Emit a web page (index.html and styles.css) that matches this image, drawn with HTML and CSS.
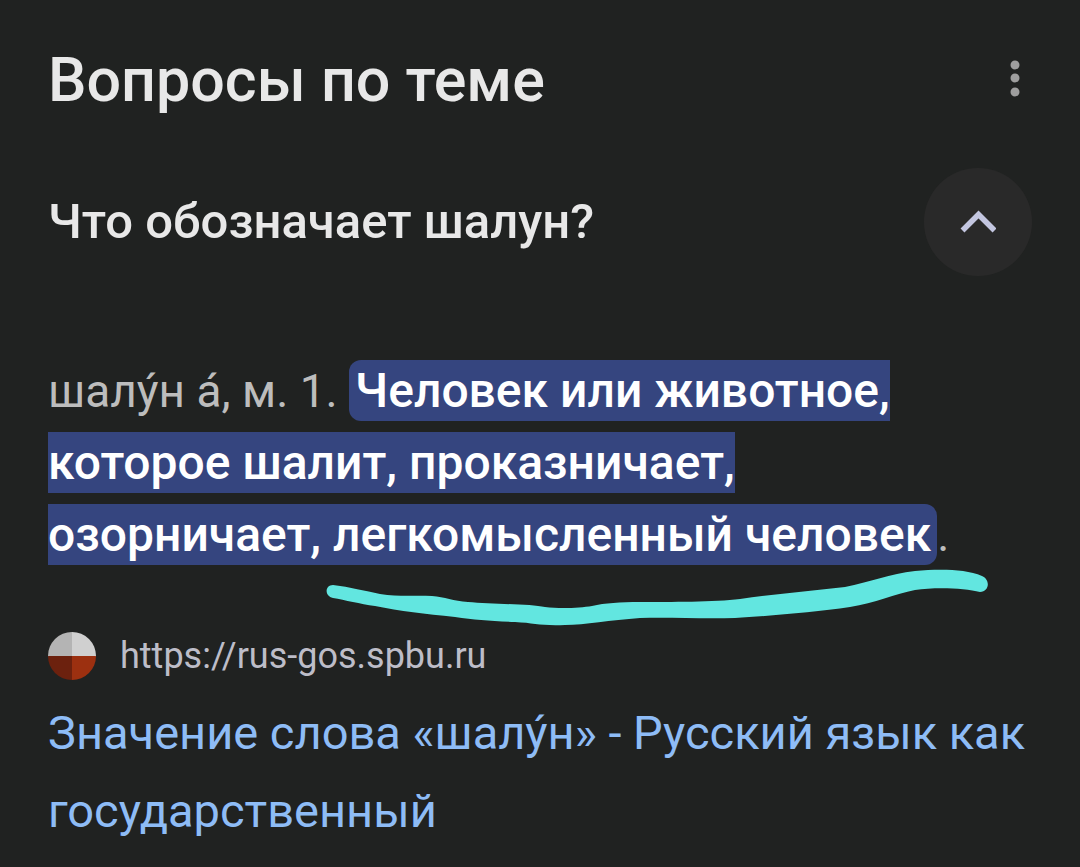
FILE: index.html
```html
<!DOCTYPE html>
<html lang="ru">
  <head>
    <meta charset="UTF-8" />
    <meta name="viewport" content="width=device-width, initial-scale=1.0" />
    <title>Вопросы по теме</title>
    <link rel="stylesheet" href="styles.css">
  </head>
  <body>
    <main>
      <header class="top">
        <h1>Вопросы по теме</h1>
        <button class="menu" type="button" aria-label="Ещё">
          <svg width="12" height="40" viewBox="0 0 12 40" fill="currentColor">
            <circle cx="6" cy="5" r="4.5" />
            <circle cx="6" cy="18" r="4.5" />
            <circle cx="6" cy="32" r="4.5" />
          </svg>
        </button>
      </header>

      <section>
        <div class="question">
          <h2>Что обозначает шалун?</h2>
          <button class="toggle" type="button" aria-label="Свернуть" aria-expanded="true">
            <svg width="36" height="24" viewBox="0 0 36 24" fill="none" stroke="currentColor" stroke-width="5.5">
              <path d="M2.500 20.500 L18.500 4.500 L34.500 20.500" />
            </svg>
          </button>
        </div>

        <div class="answer">
          <p>шалу&#x301;н а&#x301;, м. 1. <mark>Человек или животное,<br>которое шалит, проказничает,<br>озорничает, легкомысленный человек</mark>.</p>
          <svg class="underline" width="664" height="60" viewBox="326 568 664 60" aria-hidden="true">
            <path d="M333 585 C350 587 365 591 380 594 C400 597 415 595 432 596 C445 597 453 601 468 602 C490 604 530 604 545 607 C560 609 580 608 592 606 C605 603 620 602 640 602 C670 602 715 602 740 599 C775 594 810 591 845 587 C870 582 890 574 915 571 C940 569 965 569 982 576 C991 580 989 592 980 592 C965 588 935 587 915 590 C895 594 875 603 850 607 C815 612 770 616 735 618 C700 619 670 617 640 618 C610 620 585 625 565 625 C540 626 535 623 515 622 C490 621 475 620 455 617 C425 614 400 611 375 606 C360 604 345 600 333 598 C324 596 325 585 333 585 Z" />
          </svg>
        </div>

        <div class="source">
          <svg class="favicon" width="48" height="48" viewBox="0 0 48 48" aria-hidden="true">
            <clipPath id="round"><circle cx="24" cy="24" r="24" /></clipPath>
            <g clip-path="url(#round)">
              <path fill="#b4b4b4" d="M0 0h24v25H0z" />
              <path fill="#d0d0d0" d="M24 0h24v25H24z" />
              <path fill="#6c210e" d="M0 24h24v24H0z" />
              <path fill="#9c3010" d="M24 24h24v24H24z" />
            </g>
          </svg>
          <cite>https://rus-gos.spbu.ru</cite>
        </div>
        <a class="result" href="https://rus-gos.spbu.ru">Значение слова «шалу&#x301;н» - Русский язык как государственный</a>
      </section>
    </main>
  </body>
</html>
```
FILE: styles.css
```css
* {
  box-sizing: border-box;
}

body {
  margin: 0;
  background-color: #202221;
  color: #e8e8e8;
  font-family: Roboto, sans-serif;
}

main {
  padding: 40px 48px 24px;
}

h1, h2, p {
  margin: 0;
  font-weight: 500;
}

h1 {
  font-size: 61px;
  line-height: 80px;
}

h2 {
  font-size: 49px;
  line-height: 60px;
}

button {
  padding: 0;
  border: 0;
  background: none;
  cursor: pointer;
}

.top, .question {
  display: flex;
  justify-content: space-between;
  align-items: center;
}

.menu {
  display: flex;
  margin-right: 11px;
  color: #9e9e9e;
}

.question {
  margin-top: 48px;
}

.toggle {
  display: flex;
  justify-content: center;
  align-items: center;
  width: 108px;
  height: 108px;
  border-radius: 50%;
  background-color: #292929;
  color: #c3c6e0;
}

.answer {
  position: relative;
  margin-top: 79px;
}

.answer p {
  color: #bdbdbd;
  font-size: 46px;
  font-weight: 400;
  line-height: 72px;
}

mark {
  padding: 2px 6px;
  border-radius: 12px;
  background-color: #35457f;
  color: #fff;
  font-size: 48px;
  font-weight: 500;
}

/* marker stroke under the last line */
.underline {
  position: absolute;
  top: 213px;
  left: 278px;
  fill: #62e6e0;
}

.source {
  display: flex;
  align-items: center;
  gap: 24px;
  margin-top: 61px;
}

cite {
  color: #bdbdc8;
  font-size: 36px;
  font-style: normal;
  line-height: 48px;
}

.result {
  display: block;
  margin-top: 14px;
  color: #8ebcf6;
  font-size: 47px;
  line-height: 78px;
  text-decoration: none;
}
```
